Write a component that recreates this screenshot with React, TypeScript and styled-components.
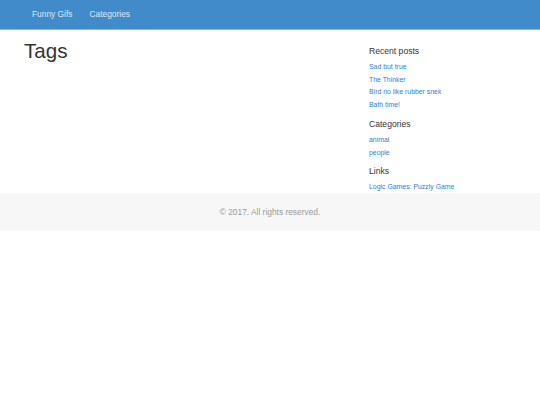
import React from 'react'
import styled, { createGlobalStyle } from 'styled-components'

const GlobalStyle = createGlobalStyle`
  body {
    margin: 0;
    background: #fff;
    font-family: "Liberation Sans", Arial, sans-serif;
    color: #333;
  }
`

const recentPosts = ['Sad but true', 'The Thinker', 'Bird no like rubber snek', 'Bath time!']
const categories = ['animal', 'people']
const links = ['Logic Games: Puzzly Game']

const App: React.FC = () => {
  return (
    <>
      <GlobalStyle />
      <StyledNavbar>
        <StyledNavLink>Funny Gifs</StyledNavLink>
        <StyledNavLink>Categories</StyledNavLink>
      </StyledNavbar>
      <StyledContainer>
        <StyledMain>
          <StyledTitle>Tags</StyledTitle>
        </StyledMain>
        <StyledSidebar>
          <StyledWidgetTitle>Recent posts</StyledWidgetTitle>
          {recentPosts.map((p) => (
            <StyledLink key={p}>{p}</StyledLink>
          ))}
          <StyledWidgetTitle>Categories</StyledWidgetTitle>
          {categories.map((c) => (
            <StyledLink key={c}>{c}</StyledLink>
          ))}
          <StyledWidgetTitle>Links</StyledWidgetTitle>
          {links.map((l) => (
            <StyledLink key={l}>{l}</StyledLink>
          ))}
        </StyledSidebar>
      </StyledContainer>
      <StyledFooter>© 2017. All rights reserved.</StyledFooter>
    </>
  )
}

const StyledNavbar = styled.nav`
  display: flex;
  align-items: center;
  gap: 17px;
  height: 29px;
  padding-left: 32px;
  background: #428bca;
  border-bottom: 1px solid #8ab8e2;
`

const StyledNavLink = styled.a`
  color: #dce9f5;
  font-size: 8.4px;
  line-height: 1;
`

const StyledContainer = styled.div`
  display: flex;
  padding: 0 24px;
`

const StyledMain = styled.div`
  flex: 1;
`

const StyledTitle = styled.h1`
  margin: 9px 0 0;
  font-size: 20.6px;
  font-weight: 400;
  line-height: 24px;
  color: #333;
`

const StyledSidebar = styled.aside`
  display: flex;
  flex-direction: column;
  width: 147px;
  padding-top: 15px;
`

const StyledWidgetTitle = styled.h4`
  margin: 0 0 4px;
  font-size: 8.6px;
  font-weight: 400;
  line-height: 12px;
  color: #333;

  & ~ & {
    margin-top: 6px;
  }
`

const StyledLink = styled.a`
  font-size: 6.9px;
  line-height: 12.7px;
  color: #2a7fd4;
`

const StyledFooter = styled.footer`
  display: flex;
  align-items: center;
  justify-content: center;
  height: 38px;
  margin-top: -1px;
  background: #f7f7f7;
  color: #999;
  font-size: 8.4px;
`

export default App
